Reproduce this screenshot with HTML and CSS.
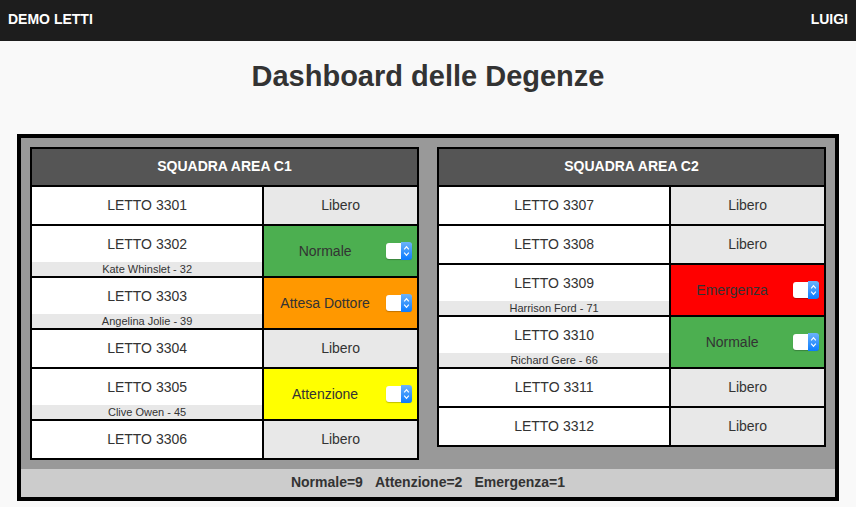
FILE: index.html
```html
<!DOCTYPE html>
<html lang="it">
<head>
<meta charset="utf-8">
<title>Dashboard delle Degenze</title>
<link rel="stylesheet" href="styles.css">
</head>
<body>
<svg width="0" height="0" class="defs" aria-hidden="true">
  <defs>
    <linearGradient id="blue" x1="0" y1="0" x2="0" y2="1">
      <stop offset="0" stop-color="#6cb3fa"/>
      <stop offset="1" stop-color="#0a7bff"/>
    </linearGradient>
    <symbol id="arrows" viewBox="0 0 11 18">
      <path d="M0 0H8a3 3 0 0 1 3 3V15a3 3 0 0 1-3 3H0Z" fill="url(#blue)"/>
      <path d="M3.2 7.3 5.5 4.7 7.8 7.3M3.2 10.7 5.5 13.3 7.8 10.7" fill="none" stroke="#fff" stroke-width="1.2"/>
    </symbol>
  </defs>
</svg>
<header class="topbar">
  <span>DEMO LETTI</span>
  <span>LUIGI</span>
</header>
<main class="page">
  <h1 class="title">Dashboard delle Degenze</h1>
  <section class="panel">
    <div class="areas">
      <table class="beds">
        <colgroup><col class="bed-col"><col class="status-col"></colgroup>
        <thead>
          <tr><th colspan="2">SQUADRA AREA C1</th></tr>
        </thead>
        <tbody>
          <tr><td class="bed">LETTO 3301</td><td class="free">Libero</td></tr>
          <tr>
            <td class="bed taken">LETTO 3302<div class="patient">Kate Whinslet - 32</div></td>
            <td class="normal"><div class="status"><label for="s3302">Normale</label><span class="picker"><select id="s3302"><option></option><option>Normale</option><option>Attenzione</option><option>Emergenza</option></select><svg><use href="#arrows"/></svg></span></div></td>
          </tr>
          <tr>
            <td class="bed taken">LETTO 3303<div class="patient">Angelina Jolie - 39</div></td>
            <td class="waiting"><div class="status"><label for="s3303">Attesa Dottore</label><span class="picker"><select id="s3303"><option></option><option>Normale</option><option>Attenzione</option><option>Emergenza</option></select><svg><use href="#arrows"/></svg></span></div></td>
          </tr>
          <tr><td class="bed">LETTO 3304</td><td class="free">Libero</td></tr>
          <tr>
            <td class="bed taken">LETTO 3305<div class="patient">Clive Owen - 45</div></td>
            <td class="attention"><div class="status"><label for="s3305">Attenzione</label><span class="picker"><select id="s3305"><option></option><option>Normale</option><option>Attenzione</option><option>Emergenza</option></select><svg><use href="#arrows"/></svg></span></div></td>
          </tr>
          <tr><td class="bed">LETTO 3306</td><td class="free">Libero</td></tr>
        </tbody>
      </table>
      <table class="beds">
        <colgroup><col class="bed-col"><col class="status-col"></colgroup>
        <thead>
          <tr><th colspan="2">SQUADRA AREA C2</th></tr>
        </thead>
        <tbody>
          <tr><td class="bed">LETTO 3307</td><td class="free">Libero</td></tr>
          <tr><td class="bed">LETTO 3308</td><td class="free">Libero</td></tr>
          <tr>
            <td class="bed taken">LETTO 3309<div class="patient">Harrison Ford - 71</div></td>
            <td class="emergency"><div class="status"><label for="s3309">Emergenza</label><span class="picker"><select id="s3309"><option></option><option>Normale</option><option>Attenzione</option><option>Emergenza</option></select><svg><use href="#arrows"/></svg></span></div></td>
          </tr>
          <tr>
            <td class="bed taken">LETTO 3310<div class="patient">Richard Gere - 66</div></td>
            <td class="normal"><div class="status"><label for="s3310">Normale</label><span class="picker"><select id="s3310"><option></option><option>Normale</option><option>Attenzione</option><option>Emergenza</option></select><svg><use href="#arrows"/></svg></span></div></td>
          </tr>
          <tr><td class="bed">LETTO 3311</td><td class="free">Libero</td></tr>
          <tr><td class="bed">LETTO 3312</td><td class="free">Libero</td></tr>
        </tbody>
      </table>
    </div>
    <footer class="totals">
      <span>Normale=9</span>
      <span>Attenzione=2</span>
      <span>Emergenza=1</span>
    </footer>
  </section>
</main>
</body>
</html>
```
FILE: styles.css
```css
* {
  box-sizing: border-box;
}

body {
  margin: 0;
  background: #f9f9f9;
  color: #333;
  font: 14px/20px "Liberation Sans", Arial, sans-serif;
}

.defs {
  position: absolute;
}

.topbar {
  display: flex;
  justify-content: space-between;
  padding: 9px 8px 12px;
  background: #1d1d1d;
  color: #fff;
  font-weight: bold;
}

.page {
  padding: 17px 17px 6px;
}

.title {
  margin: 0 0 40px;
  font-size: 29px;
  line-height: 36px;
  text-align: center;
}

.panel {
  border: 4px solid #000;
  background: #999;
}

.areas {
  display: grid;
  grid-template-columns: 1fr 1fr;
  align-items: start;
  gap: 18px;
  padding: 9px;
}

.beds {
  width: 100%;
  table-layout: fixed;
  border-collapse: collapse;
  text-align: center;
}

.bed-col {
  width: 60%;
}

.status-col {
  width: 40%;
}

.beds th,
.beds td {
  padding: 0;
  border: 2px solid #000;
  line-height: 37px;
}

.beds th {
  padding-bottom: 2px;
  background: #555;
  color: #fff;
  line-height: 34px;
}

.beds .bed {
  background: #fff;
}

.beds .taken {
  line-height: 36px;
}

.beds .patient {
  background: #e8e8e8;
  font-size: 11px;
  line-height: 14px;
}

.free {
  background: #e8e8e8;
}

.normal {
  background: #4caf50;
}

.waiting {
  background: #ff9800;
}

.attention {
  background: #ff0;
}

.emergency {
  background: #f00;
}

.status {
  display: flex;
  align-items: center;
  padding-right: 5px;
}

.status label {
  flex: 1;
}

.picker {
  position: relative;
  display: flex;
  align-items: center;
  height: 18px;
}

.picker select {
  appearance: none;
  width: 26px;
  height: 16px;
  padding: 0;
  border: 0;
  border-radius: 3px;
  background: #fff;
  box-shadow: 0 1px 1px rgba(0, 0, 0, 0.25);
}

.picker svg {
  position: absolute;
  top: 0;
  right: 0;
  width: 11px;
  height: 18px;
  pointer-events: none;
}

.totals {
  display: flex;
  justify-content: center;
  gap: 12px;
  padding: 3px 0 5px;
  background: #ccc;
  font-weight: bold;
}
```
